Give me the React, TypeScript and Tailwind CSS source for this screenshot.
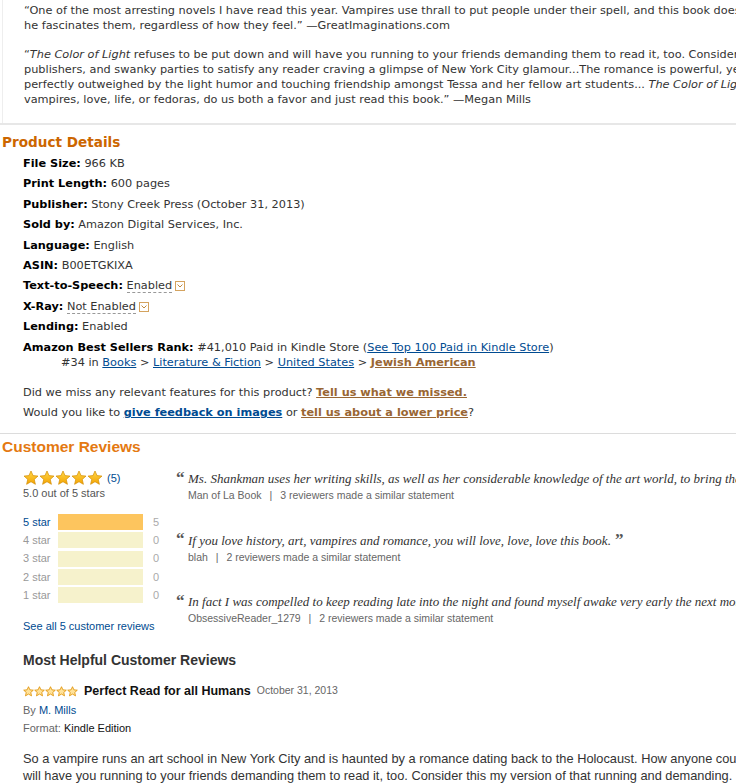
import React from 'react';

const verdana = { fontFamily: '"DejaVu Sans", Verdana, sans-serif' };
const arial = { fontFamily: '"Liberation Sans", Arial, sans-serif' };
const serif = { fontFamily: '"Liberation Serif", Georgia, serif' };

function Star({ size, outline }: { size: number; outline?: boolean }) {
  return (
    <svg width={size} height={size} viewBox="0 0 24 24">
      <defs>
        <linearGradient id="sg" x1="0" y1="0" x2="0" y2="1">
          <stop offset="0" stopColor="#ffd84a" />
          <stop offset="1" stopColor="#f3a200" />
        </linearGradient>
      </defs>
      <path
        d="M12 1.5l3.1 6.9 7.4.7-5.6 5 1.7 7.4L12 17.6l-6.6 3.9 1.7-7.4-5.6-5 7.4-.7z"
        fill={outline ? '#ffe29a' : 'url(#sg)'}
        stroke={outline ? '#e09100' : '#d08a00'}
        strokeWidth={outline ? 1.8 : 1}
        strokeLinejoin="round"
      />
    </svg>
  );
}

function Dropdown() {
  return (
    <span className="ml-[3px] inline-flex h-[10px] w-[10px] items-center justify-center border border-[#d4a35f] bg-white align-[1px]">
      <svg width="6" height="4" viewBox="0 0 6 4">
        <path d="M0.5 0.5L3 3L5.5 0.5" fill="none" stroke="#c08a3e" strokeWidth="1" />
      </svg>
    </span>
  );
}

const details: [string, React.ReactNode][] = [
  ['File Size:', '966 KB'],
  ['Print Length:', '600 pages'],
  ['Publisher:', 'Stony Creek Press (October 31, 2013)'],
  ['Sold by:', 'Amazon Digital Services,  Inc.'],
  ['Language:', 'English'],
  ['ASIN:', 'B00ETGKIXA'],
];

const bars = [
  { label: '5 star', count: 5, pct: 100 },
  { label: '4 star', count: 0, pct: 0 },
  { label: '3 star', count: 0, pct: 0 },
  { label: '2 star', count: 0, pct: 0 },
  { label: '1 star', count: 0, pct: 0 },
];

const quotes = [
  {
    text: 'Ms. Shankman uses her writing skills, as well as her considerable knowledge of the art world, to bring the reader into a world of art',
    close: false,
    who: 'Man of La Book',
    n: 3,
  },
  {
    text: 'If you love history, art, vampires and romance, you will love, love, love this book.',
    close: true,
    who: 'blah',
    n: 2,
  },
  {
    text: 'In fact I was compelled to keep reading late into the night and found myself awake very early the next morning to finish it',
    close: false,
    who: 'ObsessiveReader_1279',
    n: 2,
  },
];

export default function App() {
  return (
    <div className="h-[784px] w-[736px] overflow-hidden bg-white text-[#333]">
      {/* Editorial reviews */}
      <div className="ml-[2px] overflow-hidden border-l border-[#eee] pt-[3px] pl-[21px] pb-[16px] text-[11.3px] leading-[15px] whitespace-nowrap" style={verdana}>
        <p>
          “One of the most arresting novels I have read this year. Vampires use thrall to put people under their spell, and this book does the same;
          <br />
          he fascinates them, regardless of how they feel.” —GreatImaginations.com
        </p>
        <p className="mt-[14px]">
          “<i>The Color of Light</i> refuses to be put down and will have you running to your friends demanding them to read it, too. Consider this
          <br />
          publishers, and swanky parties to satisfy any reader craving a glimpse of New York City glamour...The romance is powerful, yet
          <br />
          perfectly outweighed by the light humor and touching friendship amongst Tessa and her fellow art students... <i>The Color of Light</i>
          <br />
          vampires, love, life, or fedoras, do us both a favor and just read this book.” —Megan Mills
        </p>
      </div>
      <div className="h-[2px] bg-[#e7e7e7]" />

      {/* Product details */}
      <div style={verdana}>
        <h2 className="mt-[8px] pl-[2px] text-[13.6px] leading-[18px] font-bold text-[#cc6600]">Product Details</h2>
        <ul className="mt-[5px] pl-[23px] text-[11.3px] leading-[15px] whitespace-nowrap">
          {details.map(([k, v]) => (
            <li key={k} className="mb-[5.4px]">
              <b className="text-black">{k}</b> {v}
            </li>
          ))}
          <li className="mb-[5.4px]">
            <b className="text-black">Text-to-Speech:</b>{' '}
            <span className="border-b border-dashed border-[#999]">Enabled</span>
            <Dropdown />
          </li>
          <li className="mb-[5.4px]">
            <b className="text-black">X-Ray:</b>{' '}
            <span className="border-b border-dashed border-[#999]">Not Enabled</span>
            <Dropdown />
          </li>
          <li className="mb-[5.4px]">
            <b className="text-black">Lending:</b> Enabled
          </li>
          <li>
            <b className="text-black">Amazon Best Sellers Rank:</b> #41,010 Paid in Kindle Store (
            <a className="text-[#004b91] underline">See Top 100 Paid in Kindle Store</a>)
            <div className="pl-[38px]">
              #34 in <a className="text-[#004b91] underline">Books</a> &gt;{' '}
              <a className="text-[#004b91] underline">Literature &amp; Fiction</a> &gt;{' '}
              <a className="text-[#004b91] underline">United States</a> &gt;{' '}
              <a className="font-bold text-[#996633] underline">Jewish American</a>
            </div>
          </li>
        </ul>
        <div className="mt-[13px] pl-[23px] text-[11.3px] leading-[20.5px] whitespace-nowrap">
          <p>
            Did we miss any relevant features for this product?{' '}
            <a className="font-bold text-[#996633] underline">Tell us what we missed.</a>
          </p>
          <p>
            Would you like to <a className="font-bold text-[#004b91] underline">give feedback on images</a> or{' '}
            <a className="font-bold text-[#996633] underline">tell us about a lower price</a>?
          </p>
        </div>
        <div className="mt-[9px] h-px bg-[#dcdcdc]" />
        <h2 className="mt-[4px] pl-[2px] text-[15.5px] leading-[18px] font-bold text-[#e47911]" style={arial}>
          Customer Reviews
        </h2>
      </div>

      {/* Review summary */}
      <div className="mt-[14px] flex" style={arial}>
        <div className="w-[153px] shrink-0 pl-[23px]">
          <div className="flex items-center">
            <div className="flex">
              {[0, 1, 2, 3, 4].map((i) => (
                <Star key={i} size={16} />
              ))}
            </div>
            <span className="ml-[4px] text-[11px] text-[#004b91]">(5)</span>
          </div>
          <div className="mt-[1px] text-[11px] leading-[13px] text-[#555]">5.0 out of 5 stars</div>
          <div className="mt-[14px] flex flex-col gap-[2.3px]">
            {bars.map((b) => (
              <div key={b.label} className="flex h-[16px] items-center text-[11px]">
                <span className={`w-[35px] shrink-0 ${b.count ? 'text-[#004b91]' : 'text-[#999]'}`}>{b.label}</span>
                <div className="h-[16px] w-[85px] shrink-0 bg-[#f6f2cc]">
                  <div className="h-full bg-[#fdc55e]" style={{ width: `${b.pct}%` }} />
                </div>
                <span className="ml-[10px] text-[#aaa]">{b.count}</span>
              </div>
            ))}
          </div>
          <a className="mt-[15px] block text-[11px] text-[#004b91] whitespace-nowrap">See all 5 customer reviews</a>
        </div>

        <div className="min-w-0 flex-1 overflow-hidden pl-[23px]">
          {quotes.map((q, i) => (
            <div key={i} className={`whitespace-nowrap ${i ? 'mt-[29px]' : ''}`}>
              <div className="flex items-start">
                <span className="w-[12px] shrink-0 text-[17px] leading-[16px] font-bold text-[#555]" style={serif}>“</span>
                <span className="text-[13px] leading-[18px] text-[#333] italic" style={serif}>
                  {q.text}
                  {q.close && <b className="ml-[4px] text-[17px] not-italic text-[#555]">”</b>}
                </span>
              </div>
              <div className="pl-[12px] text-[10.5px] leading-[14px] text-[#666]">
                {q.who} <span className="mx-[5px]">|</span> {q.n} reviewers made a similar statement
              </div>
            </div>
          ))}
        </div>
      </div>

      {/* Most helpful */}
      <div className="mt-[16px] pl-[23px] whitespace-nowrap" style={arial}>
        <h3 className="text-[14px] leading-[18px] font-bold text-[#333]">Most Helpful Customer Reviews</h3>
        <div className="mt-[13px] flex items-center">
          <div className="flex">
            {[0, 1, 2, 3, 4].map((i) => (
              <Star key={i} size={11} outline />
            ))}
          </div>
          <b className="ml-[6px] text-[12.5px] text-[#111]">Perfect Read for all Humans</b>
          <span className="ml-[6px] text-[10.5px] text-[#666]">October 31, 2013</span>
        </div>
        <div className="mt-[3px] text-[11px] leading-[15px] text-[#666]">
          By <a className="text-[#004b91]">M. Mills</a>
        </div>
        <div className="mt-[3px] text-[11px] leading-[15px] text-[#666]">
          Format: <span className="text-[#111]">Kindle Edition</span>
        </div>
        <p className="mt-[14px] text-[12.8px] leading-[17px] text-[#333]">
          So a vampire runs an art school in New York City and is haunted by a romance dating back to the Holocaust. How anyone could pass this up
          <br />
          will have you running to your friends demanding them to read it, too. Consider this my version of that running and demanding.
        </p>
      </div>
    </div>
  );
}
